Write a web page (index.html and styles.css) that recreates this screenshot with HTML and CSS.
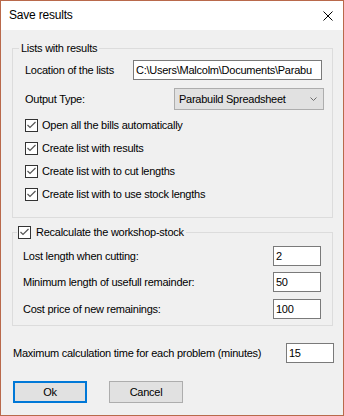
FILE: index.html
```html
<!DOCTYPE html>
<html>
<head>
<meta charset="utf-8">
<link rel="stylesheet" href="styles.css">
</head>
<body>
<div class="window">
  <div class="titlebar">
    <span class="title">Save results</span>
    <svg class="close" width="10" height="10" viewBox="0 0 10 10"><path d="M0.5 0.5L9.5 9.5M9.5 0.5L0.5 9.5" stroke="#000" stroke-width="1" fill="none"/></svg>
  </div>
  <div class="content">
    <fieldset class="group g1">
      <legend class="legend">Lists with results</legend>
      <div class="g1-body">
        <div class="row loc">
          <span>Location of the lists</span>
          <div class="input wide">C:\Users\Malcolm\Documents\Parabu</div>
        </div>
        <div class="row out">
          <span>Output Type:</span>
          <div class="select"><span>Parabuild Spreadsheet</span>
            <svg width="7" height="4" viewBox="0 0 7 4"><path d="M0.5 0.5L3.5 3.5L6.5 0.5" stroke="#6d6d6d" fill="none" stroke-width="1"/></svg>
          </div>
        </div>
        <div class="checks">
          <label class="check"><svg class="cb" width="13" height="13" viewBox="0 0 13 13"><rect x="0.5" y="0.5" width="12" height="12" fill="#fff" stroke="#333"/><path d="M2.5 6L5 8.5L10.5 3" fill="none" stroke="#555" stroke-width="1.2"/></svg><span>Open all the bills automatically</span></label>
          <label class="check"><svg class="cb" width="13" height="13" viewBox="0 0 13 13"><rect x="0.5" y="0.5" width="12" height="12" fill="#fff" stroke="#333"/><path d="M2.5 6L5 8.5L10.5 3" fill="none" stroke="#555" stroke-width="1.2"/></svg><span>Create list with results</span></label>
          <label class="check"><svg class="cb" width="13" height="13" viewBox="0 0 13 13"><rect x="0.5" y="0.5" width="12" height="12" fill="#fff" stroke="#333"/><path d="M2.5 6L5 8.5L10.5 3" fill="none" stroke="#555" stroke-width="1.2"/></svg><span>Create list with to cut lengths</span></label>
          <label class="check"><svg class="cb" width="13" height="13" viewBox="0 0 13 13"><rect x="0.5" y="0.5" width="12" height="12" fill="#fff" stroke="#333"/><path d="M2.5 6L5 8.5L10.5 3" fill="none" stroke="#555" stroke-width="1.2"/></svg><span>Create list with to use stock lengths</span></label>
        </div>
      </div>
    </fieldset>

    <fieldset class="group g2">
      <legend class="legend legend-check"><svg class="cb" width="13" height="13" viewBox="0 0 13 13"><rect x="0.5" y="0.5" width="12" height="12" fill="#fff" stroke="#333"/><path d="M2.5 6L5 8.5L10.5 3" fill="none" stroke="#555" stroke-width="1.2"/></svg><span>Recalculate the workshop-stock</span></legend>
      <div class="g2-body">
        <div class="row field"><span>Lost length when cutting:</span><div class="input small">2</div></div>
        <div class="row field"><span>Minimum length of usefull remainder:</span><div class="input small">50</div></div>
        <div class="row field last"><span>Cost price of new remainings:</span><div class="input small">100</div></div>
      </div>
    </fieldset>

    <div class="row maxrow">
      <span>Maximum calculation time for each problem (minutes)</span>
      <div class="input small">15</div>
    </div>

    <div class="buttons">
      <div class="btn default">Ok</div>
      <div class="btn">Cancel</div>
    </div>
  </div>
</div>
</body>
</html>
```

FILE: styles.css
```css
* { box-sizing: border-box; }
body {
  margin: 0;
  font: 11px/13px "Liberation Sans", Arial, sans-serif;
  letter-spacing: -0.25px;
  color: #000;
}
.window {
  width: 344px;
  height: 416px;
  border: 1px solid #b9694b;
  background: #f0f0f0;
  display: flex;
  flex-direction: column;
}
.titlebar {
  height: 29px;
  flex: none;
  background: #fff;
  display: flex;
  align-items: center;
  justify-content: space-between;
  padding: 0 10px 0 8px;
}
.title {
  font-size: 12px;
  letter-spacing: -0.2px;
}
.close { display: block; }
.content {
  padding: 12px 0 0 11px;
}
.group {
  margin: 0;
  padding: 0;
  min-width: 0;
  width: 321px;
  border: 1px solid #dcdcdc;
}
.legend {
  padding: 0 2px;
  margin-left: 6px;
  line-height: 13px;
  height: 13px;
}
.legend-check {
  display: flex;
  align-items: center;
  gap: 5px;
  margin-left: 4px;
  padding: 0 2px 0 1px;
}
.cb { display: block; flex: none; }
.g1-body {
  padding: 5px 8px 16px 12px;
}
.row {
  display: flex;
  align-items: center;
  justify-content: space-between;
}
.loc { height: 20px; }
.out { height: 22px; margin-top: 8px; }
.input {
  background: #fff;
  border: 1px solid #7a7a7a;
  height: 20px;
  line-height: 18px;
  padding: 0 2px;
  white-space: nowrap;
  overflow: hidden;
}
.input.wide {
  width: 189px;
  margin-right: 2px;
}
.input.small { width: 48px; }
.select {
  width: 150px;
  height: 22px;
  background: #e1e1e1;
  border: 1px solid #adadad;
  display: flex;
  align-items: center;
  justify-content: space-between;
  padding: 0 6px 0 4px;
}
.select svg { display: block; }
.checks {
  display: flex;
  flex-direction: column;
  gap: 10px;
  margin-top: 9px;
}
.check {
  display: flex;
  align-items: center;
  gap: 4px;
  height: 13px;
}
.g2 { margin-top: 8px; }
.g2-body {
  padding: 7px 11px 6px 10px;
}
.field { height: 20px; }
.field + .field { margin-top: 6px; }
.field.last { margin-top: 7px; }
.maxrow {
  width: 322px;
  margin-top: 17px;
  padding-left: 1px;
  height: 20px;
}
.buttons {
  display: flex;
  gap: 22px;
  margin-top: 18px;
  padding-left: 1px;
}
.btn {
  width: 74px;
  height: 22px;
  background: #e1e1e1;
  border: 1px solid #adadad;
  display: flex;
  align-items: center;
  justify-content: center;
}
.btn.default {
  border: 2px solid #0078d7;
}
```
